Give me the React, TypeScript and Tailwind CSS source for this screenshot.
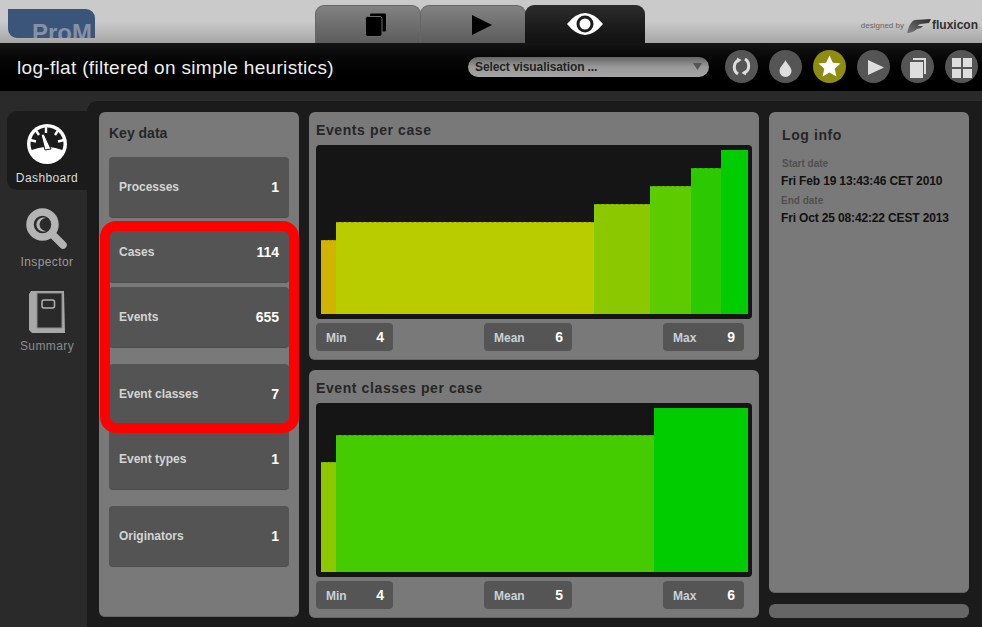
import React from 'react';

const keyData = [
  { label: 'Processes', value: '1', margin: 'mt-0' },
  { label: 'Cases', value: '114', margin: 'mt-[4px]' },
  { label: 'Events', value: '655', margin: 'mt-[4px]' },
  { label: 'Event classes', value: '7', margin: 'mt-[16px]' },
  { label: 'Event types', value: '1', margin: 'mt-[4px]' },
  { label: 'Originators', value: '1', margin: 'mt-[16px]' },
];

const eventsPerCase = [
  { w: 15, h: 74, color: '#d0b400' },
  { w: 258, h: 92, color: '#b8cc00' },
  { w: 56, h: 110, color: '#8cc800' },
  { w: 41, h: 128, color: '#5ccc00' },
  { w: 30, h: 146, color: '#2cc800' },
  { w: 27, h: 164, color: '#00cc00' },
];

const classesPerCase = [
  { w: 15, h: 110, color: '#8ec800' },
  { w: 318, h: 137, color: '#44cc00' },
  { w: 94, h: 164, color: '#00cc00' },
];

function Pill({ label, value, width }: { label: string; value: string; width: string }) {
  return (
    <div className={`${width} h-[28px] rounded-[4px] bg-[#555555] flex items-center justify-between pl-[10px] pr-[9px] pt-[1px]`}>
      <span className="text-[12px] font-bold text-[#c8d0d8]">{label}</span>
      <span className="text-[14px] font-bold text-white">{value}</span>
    </div>
  );
}

function ChartPanel({ title, bars, stats }: {
  title: string;
  bars: { w: number; h: number; color: string }[];
  stats: string[];
}) {
  return (
    <div className="h-[248px] rounded-[6px] border-b border-[#666666] bg-[#797979] px-[7px]">
      <div className="h-[33px] pt-[9px] text-[14px] leading-[18px] font-bold tracking-[0.6px] text-[#262626]">{title}</div>
      <div className="h-[174px] rounded-[4px] bg-[#151515] flex items-end pl-[5px] pr-[4px] pb-[5px]">
        {bars.map((bar, i) => (
          <div
            key={i}
            className={i < bars.length - 1 ? 'shrink-0 border-t border-dashed border-black/15' : 'shrink-0'}
            style={{ width: bar.w, height: bar.h, backgroundColor: bar.color }}
          />
        ))}
      </div>
      <div className="mt-[4px] pr-[8px] flex justify-between">
        <Pill label="Min" value={stats[0]} width="w-[77px]" />
        <Pill label="Mean" value={stats[1]} width="w-[88px]" />
        <Pill label="Max" value={stats[2]} width="w-[81px]" />
      </div>
    </div>
  );
}

function RoundButton({ active, children }: { active?: boolean; children: React.ReactNode }) {
  return (
    <div className={`w-[33px] h-[33px] rounded-full flex items-center justify-center ${active ? 'bg-[#8f8c12]' : 'bg-[#555555]'}`}>
      <svg width="33" height="33" viewBox="0 0 33 33">{children}</svg>
    </div>
  );
}

function TabButton({ className, children }: { className: string; children: React.ReactNode }) {
  return <div className={`h-[38px] rounded-t-[9px] flex items-center justify-center ${className}`}>{children}</div>;
}

function Gauge() {
  return (
    <svg width="40" height="40" viewBox="0 0 40 40">
      <circle cx="20" cy="20" r="20" fill="#ffffff" />
      <circle cx="20" cy="20" r="16.5" fill="#1b1b1b" />
      <path d="M3 27 A18.5 18.5 0 0 0 37 27 Q20 19 3 27 Z" fill="#ffffff" />
      <path d="M19 3v6M9 6.5l3 4.5M31 6.5l-3 4.5M3 16l6 1.5M37 16l-6 1.5" stroke="#ffffff" strokeWidth="2.4" />
      <path d="M14 10.5 L17 10 L24 25 L18 26 Z" fill="#ffffff" stroke="#1b1b1b" strokeWidth="1" />
    </svg>
  );
}

function Magnifier() {
  return (
    <svg width="42" height="42" viewBox="0 0 42 42">
      <path d="M27 27 L37 37" stroke="#b4b4b4" strokeWidth="7.5" strokeLinecap="round" />
      <circle cx="16.5" cy="16.5" r="12.5" fill="#2a2a2a" stroke="#b4b4b4" strokeWidth="7.5" />
      <path d="M20 10 A7 7 0 1 0 20 23 A6.5 6.5 0 1 1 20 10 Z" fill="#b4b4b4" />
    </svg>
  );
}

function Book() {
  return (
    <svg width="36" height="42" viewBox="0 0 36 42">
      <path d="M0 3 L2 0 H35 L36 42 H3 L0 39 Z" fill="#a8a8a8" />
      <rect x="8" y="2" width="25" height="35" fill="#2a2a2a" stroke="#8e8e8e" strokeWidth="1" />
      <rect x="13" y="9" width="12.5" height="8" rx="2" fill="none" stroke="#b4b4b4" strokeWidth="1.5" />
    </svg>
  );
}

export default function App() {
  return (
    <div className="relative w-[982px] h-[627px] overflow-hidden bg-[#2a2a2a] font-['Liberation_Sans',Arial,sans-serif]">
      {/* Top strip with logo, tabs and credit */}
      <div className="h-[43px] bg-gradient-to-b from-[#cacaca] from-50% to-[#a6a6a6] flex">
        <div className="w-[315px] pl-[8px] pt-[9px]">
          <div className="w-[87px] h-[29px] overflow-hidden rounded-tr-[9px] rounded-bl-[9px] bg-[#3b5479] pl-[24px] pt-[10px] text-[24px] leading-[28px] font-bold text-[#8392a8]">
            ProM
          </div>
        </div>
        <div className="w-[330px] pt-[5px] flex">
          <TabButton className="w-[106px] border border-b-0 border-[#666666] bg-gradient-to-b from-[#828282] to-[#5c5c5c]">
            <svg className="ml-[14px]" width="21" height="24" viewBox="0 0 21 24">
              <rect x="5" y="0.5" width="16" height="18" rx="1" fill="#000000" />
              <rect x="0.5" y="3.5" width="16.5" height="20" rx="2" fill="#000000" stroke="#6c6c6c" strokeWidth="1" />
            </svg>
          </TabButton>
          <TabButton className="w-[106px] -ml-px border border-b-0 border-[#666666] bg-gradient-to-b from-[#828282] to-[#5c5c5c]">
            <svg className="ml-[18px]" width="20" height="20" viewBox="0 0 20 20">
              <path d="M0 0 L20 10 L0 20 Z" fill="#000000" />
            </svg>
          </TabButton>
          <TabButton className="w-[120px] -ml-px bg-gradient-to-b from-[#2c2c2c] to-[#111111]">
            <svg width="36" height="22" viewBox="0 0 36 22">
              <path d="M0 11 Q18 -11 36 11 Q18 33 0 11 Z" fill="#ffffff" />
              <circle cx="18" cy="11" r="8.5" fill="#1c1c1c" />
              <circle cx="18" cy="11" r="5.5" fill="#ffffff" />
            </svg>
          </TabButton>
        </div>
        <div className="flex-1 pt-[18px] pr-[4px] flex justify-end items-start">
          <span className="mt-[2px] text-[8px] leading-[12px] text-[#666666]">designed by</span>
          <svg className="ml-[3px]" width="24" height="16" viewBox="0 0 24 16">
            <defs>
              <linearGradient id="wing" x1="0" y1="1" x2="1" y2="0">
                <stop offset="0" stopColor="#777777" />
                <stop offset="1" stopColor="#2c2c2c" />
              </linearGradient>
            </defs>
            <path d="M0 15 C2 8 4 3 8 2 L24 1 L22 5 L14 6 C12 6 11 7 11 8 L16 8 L14 10 L10 11 C8 13 4 15 0 15 Z" fill="url(#wing)" />
          </svg>
          <span className="ml-[1px] text-[12px] leading-[14px] font-bold text-[#303030]">fluxicon</span>
        </div>
      </div>

      {/* Title bar */}
      <div className="h-[48px] bg-gradient-to-b from-[#141414] to-[#000000] flex items-center pl-[17px]">
        <div className="w-[451px] pt-[2px] text-[19px] tracking-[0.32px] text-[#eeeeee] whitespace-nowrap">log-flat (filtered on simple heuristics)</div>
        <div className="w-[241px] h-[20px] rounded-full bg-gradient-to-b from-[#666666] via-[#999999] to-[#a4a4a4] flex items-center justify-between pl-[7px] pr-[7px] -mt-[1px]">
          <span className="text-[12px] font-bold tracking-[-0.1px] text-[#222222]">Select visualisation ...</span>
          <svg width="9" height="7" viewBox="0 0 9 7"><path d="M0 0 H9 L4.5 7 Z" fill="#555555" /></svg>
        </div>
        <div className="ml-[16px] flex gap-[11px] -mt-[2px]">
          <RoundButton>
            <path d="M13.5 10 C8 13 8 21 13 24" fill="none" stroke="#dddddd" strokeWidth="3" />
            <path d="M12 7.5 L16.5 10 L12.5 13 Z" fill="#dddddd" />
            <path d="M19.5 23 C25 20 25 12 20 9" fill="none" stroke="#dddddd" strokeWidth="3" />
            <path d="M21 25.5 L16.5 23 L20.5 20 Z" fill="#dddddd" />
          </RoundButton>
          <RoundButton>
            <path d="M16.5 10 C17.5 13.5 22.5 16.5 22.5 21 A6 6 0 0 1 10.5 21 C10.5 16.5 15.5 13.5 16.5 10 Z" fill="#dddddd" />
          </RoundButton>
          <RoundButton active>
            <path d="M16.5 5.5 L19.8 12.8 L27.5 13.6 L21.7 18.8 L23.4 26.5 L16.5 22.5 L9.6 26.5 L11.3 18.8 L5.5 13.6 L13.2 12.8 Z" fill="#ffffff" />
          </RoundButton>
          <RoundButton>
            <path d="M11 10 L27 17.5 L11 25 Z" fill="#dddddd" />
          </RoundButton>
          <RoundButton>
            <path d="M12 8 H25 V24 H23 V10 H12 Z" fill="#dddddd" />
            <rect x="9" y="12" width="13" height="16" fill="#dddddd" />
          </RoundButton>
          <RoundButton>
            <rect x="7" y="8" width="9" height="9" fill="#dddddd" />
            <rect x="18" y="8" width="9" height="9" fill="#dddddd" />
            <rect x="7" y="19" width="9" height="9" fill="#dddddd" />
            <rect x="18" y="19" width="9" height="9" fill="#dddddd" />
          </RoundButton>
        </div>
      </div>

      <div className="h-[536px] flex">
        {/* Left navigation */}
        <div className="w-[87px] pl-[7px] pt-[20px] flex flex-col gap-[5px]">
          <div className="h-[79px] rounded-l-[10px] bg-[#1b1b1b] flex flex-col items-center pt-[13px]">
            <Gauge />
            <span className="mt-[6px] text-[12px] leading-[16px] tracking-[0.4px] text-[#dddddd]">Dashboard</span>
          </div>
          <div className="h-[79px] flex flex-col items-center pt-[13px]">
            <Magnifier />
            <span className="mt-[4px] text-[12px] leading-[16px] tracking-[0.4px] text-[#9a9a9a]">Inspector</span>
          </div>
          <div className="h-[79px] flex flex-col items-center pt-[12px]">
            <Book />
            <span className="mt-[5px] text-[12px] leading-[16px] tracking-[0.4px] text-[#8c8c8c]">Summary</span>
          </div>
        </div>

        {/* Main content */}
        <div className="flex-1 mt-[10px] rounded-tl-[10px] bg-[#1b1b1b] pl-[12px] pt-[11px] flex gap-[10px]">
          <div className="w-[200px] h-[505px] rounded-[6px] border-b border-[#666666] bg-[#797979] px-[10px]">
            <div className="h-[45px] pt-[12px] text-[14px] leading-[18px] font-bold text-[#262626]">Key data</div>
            {keyData.map((item) => (
              <div key={item.label} className={`${item.margin} h-[61px] rounded-[4px] border-b border-[#4c4c4c] bg-[#545454] flex items-center justify-between pl-[10px] pr-[10px]`}>
                <span className="text-[12px] font-bold text-[#d4d4d4]">{item.label}</span>
                <span className="text-[14px] font-bold text-white">{item.value}</span>
              </div>
            ))}
          </div>

          <div className="w-[450px] flex flex-col gap-[10px]">
            <ChartPanel title="Events per case" bars={eventsPerCase} stats={['4', '6', '9']} />
            <ChartPanel title="Event classes per case" bars={classesPerCase} stats={['4', '5', '6']} />
          </div>

          <div className="w-[200px] flex flex-col gap-[11px]">
            <div className="h-[481px] rounded-[6px] border-b border-[#666666] bg-[#797979] px-[12px] pt-[14px]">
              <div className="pl-[1px] text-[14px] leading-[18px] font-bold tracking-[0.6px] text-[#262626]">Log info</div>
              <div className="mt-[14px] pl-[1px] text-[10px] leading-[12px] font-bold text-[#505050]">Start date</div>
              <div className="mt-[3px] text-[12px] leading-[16px] font-bold tracking-[-0.15px] text-[#111111] whitespace-nowrap">Fri Feb 19 13:43:46 CET 2010</div>
              <div className="mt-[6px] text-[10px] leading-[12px] font-bold text-[#505050]">End date</div>
              <div className="mt-[3px] text-[12px] leading-[16px] font-bold tracking-[-0.15px] text-[#111111] whitespace-nowrap">Fri Oct 25 08:42:22 CEST 2013</div>
            </div>
            <div className="h-[14px] rounded-[6px] bg-[#666666]" />
          </div>
        </div>
      </div>

      {/* Red annotation drawn over the key data cards */}
      <div className="absolute left-[100px] top-[221px] w-[199px] h-[212px] rounded-[16px] border-[10px] border-[#ff0000]" />
    </div>
  );
}
